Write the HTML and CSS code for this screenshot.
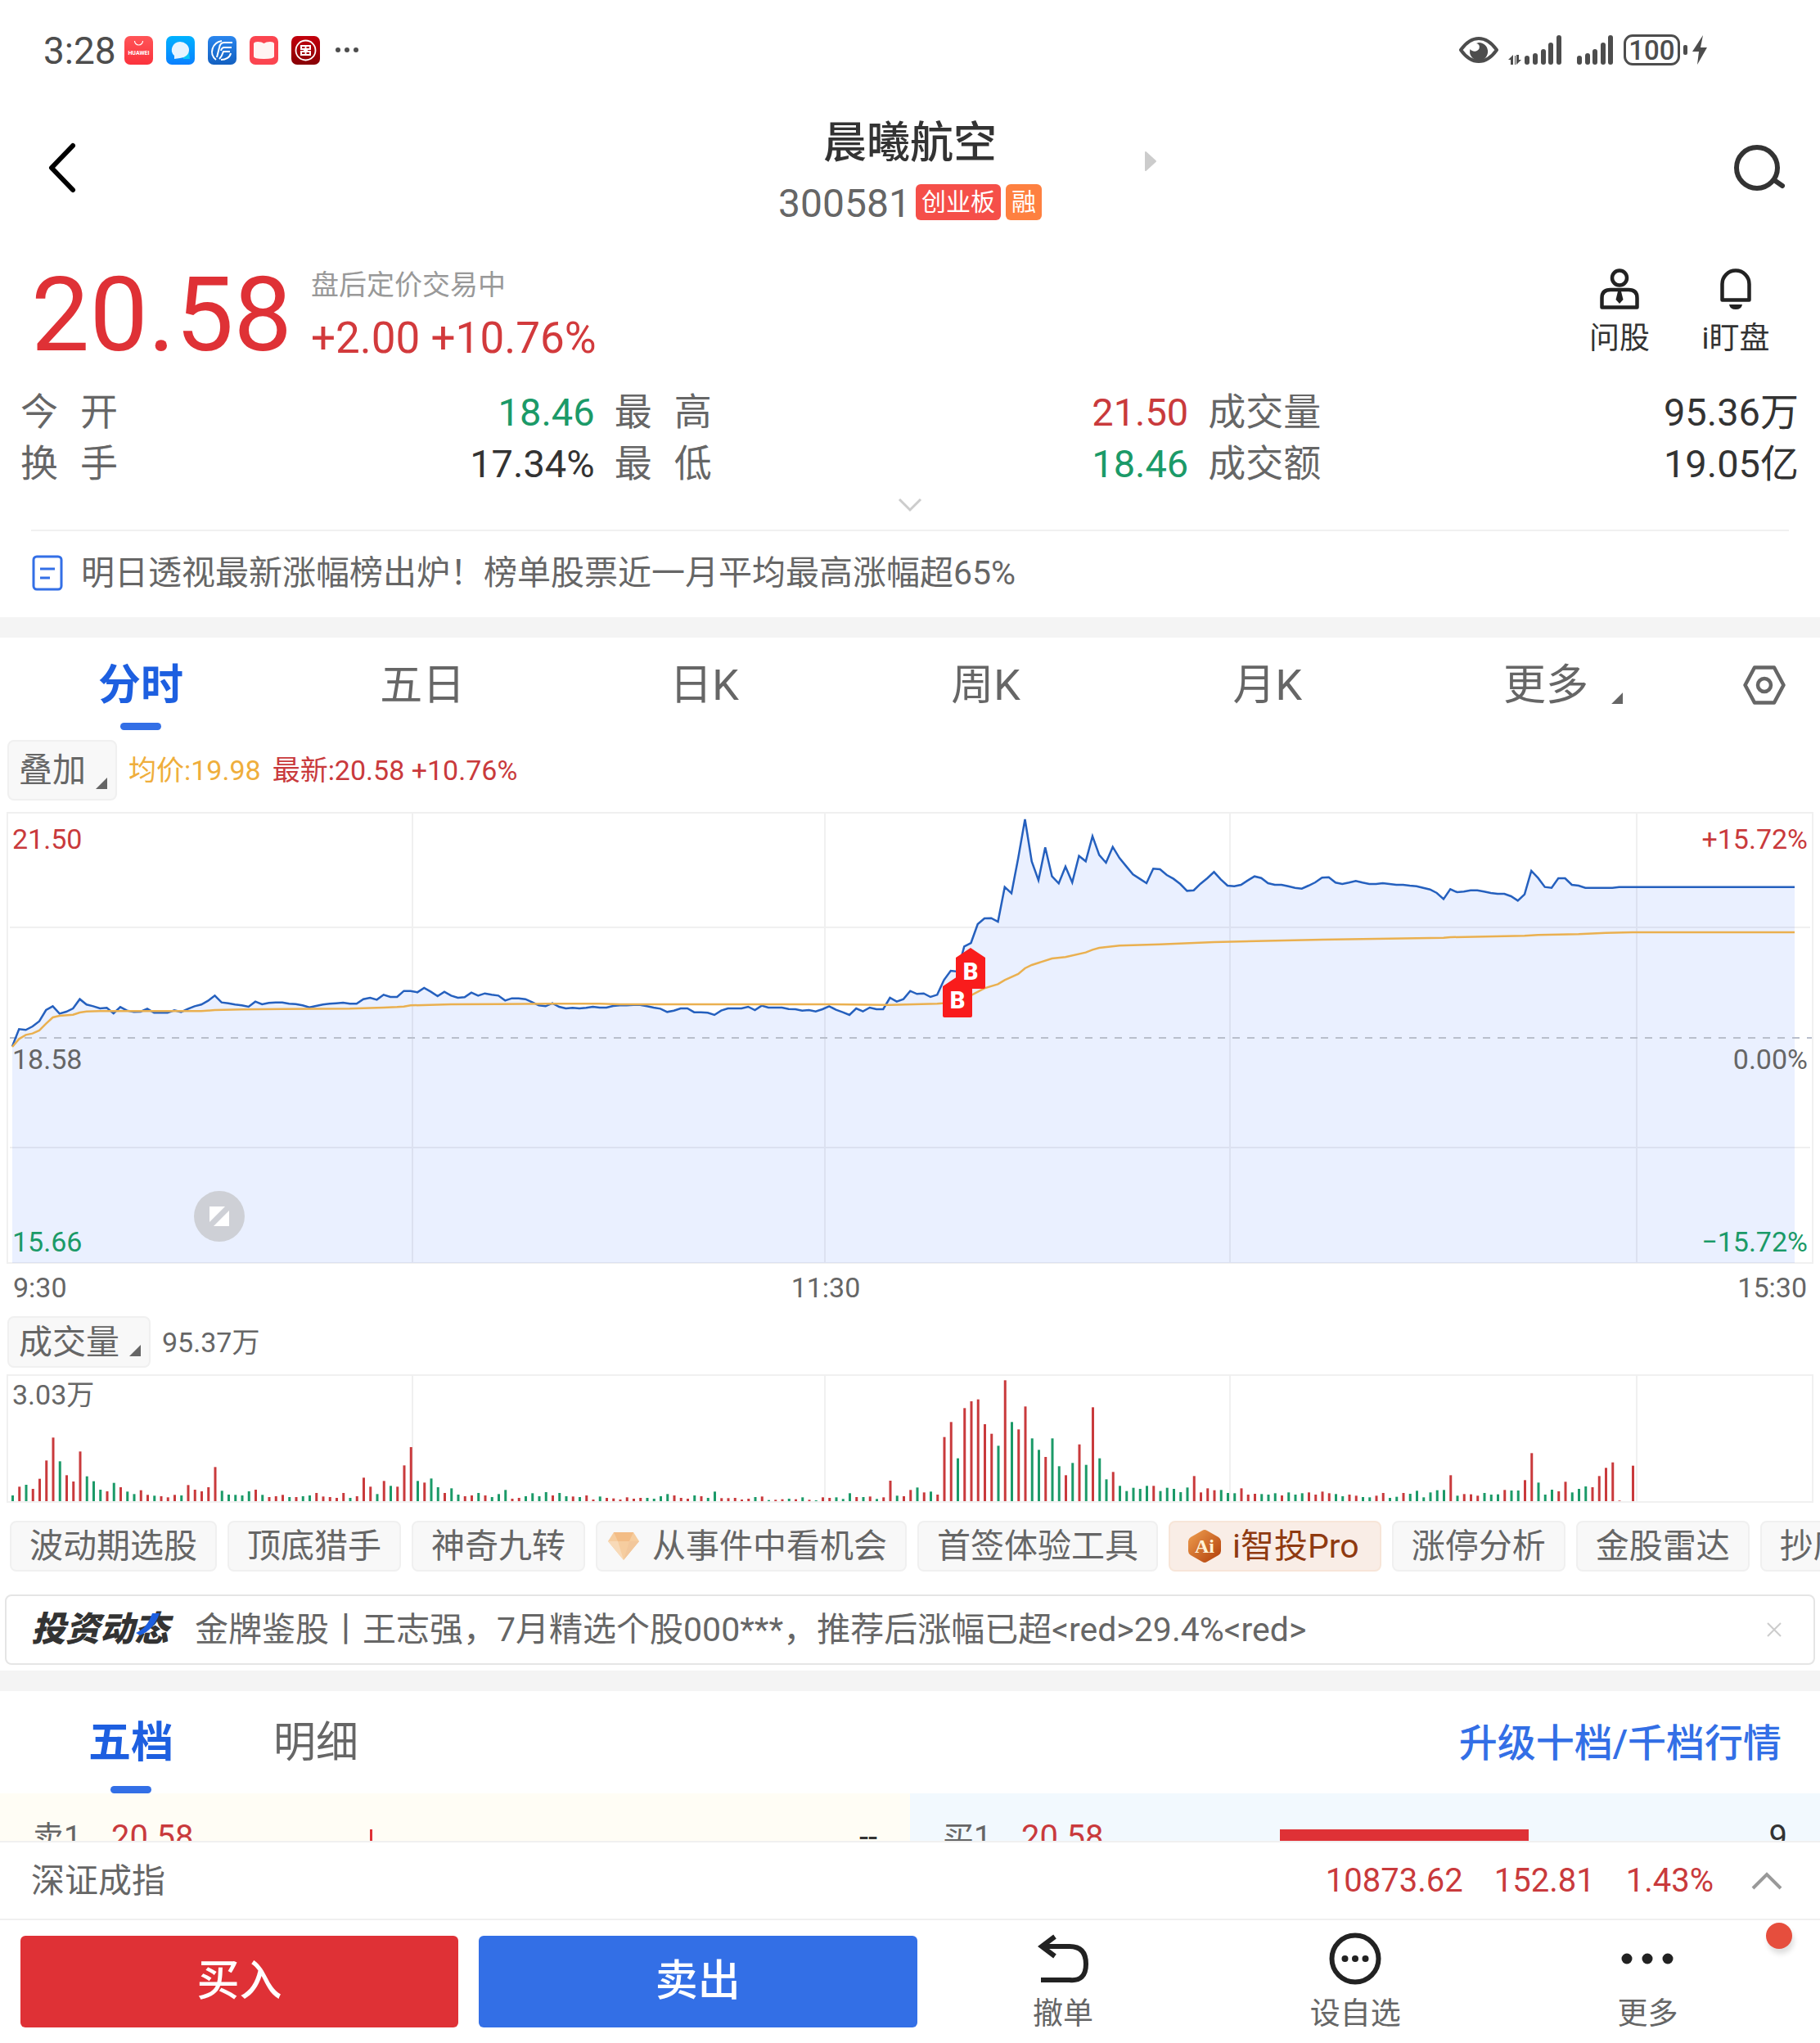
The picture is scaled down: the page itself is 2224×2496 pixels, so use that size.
FILE: index.html
```html
<!DOCTYPE html>
<html lang="zh-CN">
<head>
<meta charset="utf-8">
<meta name="viewport" content="width=device-width, initial-scale=1">
<title>晨曦航空 300581</title>
<link rel="stylesheet" href="styles.css">
</head>
<body>
<div class="app">
  <main class="content">
    <div class="status">
      <span class="status-time">3:28</span>
      <div class="status-apps">
        <svg viewBox="0 0 35 35"><defs><linearGradient id="ga" x2="0" y2="1"><stop stop-color="#ff5558"/><stop offset="1" stop-color="#fb323c"/></linearGradient></defs><rect width="35" height="35" rx="7" fill="url(#ga)"/><path d="M12.500 6a5 5 0 0 0 10 0" fill="none" stroke="#fff" stroke-width="1.200"/><text x="17.500" y="23" class="mini-word">HUAWEI</text></svg>
        <svg viewBox="0 0 35 35"><defs><linearGradient id="gb" x2="0" y2="1"><stop stop-color="#00b2ff"/><stop offset="1" stop-color="#0a80ff"/></linearGradient></defs><rect width="35" height="35" rx="7" fill="url(#gb)"/><path d="M20 20l8 0 1 8-8 0z" fill="#0bc6f5"/><path d="M17 7a11 10 0 0 1 0 20l-7 1v-4A11 10 0 0 1 17 7z" fill="#e6f4ff"/></svg>
        <svg viewBox="0 0 35 35"><defs><linearGradient id="gc" x2="0" y2="1"><stop stop-color="#2a86ee"/><stop offset="1" stop-color="#1360c0"/></linearGradient></defs><rect width="35" height="35" rx="7" fill="url(#gc)"/><path d="M30 8H20q-5 0-6 6l-3 12M29 14h-9q-3 0-4 4M27 19h-8q-2 6-5 9M17 6C5 8 1 22 10 29M28 21c-1 5-6 8-12 8" fill="none" stroke="#fff" stroke-width="2"/></svg>
        <svg viewBox="0 0 35 35"><rect width="35" height="35" rx="7" fill="#fb4550"/><path d="M5 9q1-2 5-2 5 0 7.500 2Q20 7 25 7q4 0 5 2v16q0 3-12.500 3T5 25z" fill="#fff4f3"/></svg>
        <svg viewBox="0 0 35 35"><defs><linearGradient id="gd" x2="0" y2="1"><stop stop-color="#c3000c"/><stop offset="1" stop-color="#870005"/></linearGradient></defs><rect width="35" height="35" rx="7" fill="url(#gd)"/><circle cx="17.500" cy="17.500" r="12" fill="none" stroke="#fff" stroke-width="1.800"/><path d="M11 12h13M11 23h13M12 12v4h4v3h-4v4M23 12v4h-4v3h4v4M17.500 12v11" fill="none" stroke="#fff" stroke-width="2"/></svg>
      </div>
      <svg class="status-more" viewBox="0 0 30 8"><circle cx="4" cy="4" r="3"/><circle cx="15" cy="4" r="3"/><circle cx="26" cy="4" r="3"/></svg>
      <div class="status-right">
        <svg class="eye" viewBox="0 0 48 34"><path d="M2 17Q12 3 24 3t22 14Q36 31 24 31T2 17z" fill="none" stroke="#4d4d4d" stroke-width="4" stroke-linejoin="round"/><path d="M24 8a11 11 0 1 1-10.500 8 6.500 6.500 0 0 0 11-.500Q26 10 21 9z" fill="#4d4d4d"/></svg>
        <svg class="signal-data" viewBox="0 0 66 36"><path d="M0 30l6-6v12H3v-6zM16 30l-6 6V24h3v6zM8 25h1v11H8z"/><rect x="20" y="25" width="6" height="11" rx="3"/><rect x="30" y="22" width="6" height="14" rx="3"/><rect x="40" y="17" width="6" height="19" rx="3"/><rect x="49" y="9" width="6" height="27" rx="3"/><rect x="59" y="0" width="6" height="36" rx="3"/></svg>
        <svg class="signal" viewBox="0 0 45 36"><rect x="0" y="25" width="6" height="11" rx="3"/><rect x="10" y="22" width="6" height="14" rx="3"/><rect x="19" y="17" width="6" height="19" rx="3"/><rect x="29" y="9" width="6" height="27" rx="3"/><rect x="38" y="0" width="6" height="36" rx="3"/></svg>
        <span class="battery">100</span>
        <svg class="bolt" viewBox="0 0 30 36"><rect x="0" y="12" width="5" height="12" rx="2"/><path d="M24 0L11 20h8l-2 16L29 15h-8z"/></svg>
      </div>
    </div>

    <header class="header">
      <button class="icon-button" aria-label="返回"><svg class="back" viewBox="0 0 36 64"><path d="M31 5L5 32l26 27" fill="none" stroke="#000" stroke-width="6" stroke-linecap="round" stroke-linejoin="round"/></svg></button>
      <div class="stock">
        <h1 class="stock-name">晨曦航空</h1>
        <div class="stock-line"><span class="stock-code">300581</span><span class="badge badge-red">创业板</span><span class="badge badge-orange">融</span></div>
        <svg class="next" viewBox="0 0 16 26"><path d="M2 2l12 11L2 24z" fill="#ccc" stroke="#ccc" stroke-width="2" stroke-linejoin="round"/></svg>
      </div>
      <button class="icon-button" aria-label="搜索"><svg class="search" viewBox="0 0 64 58"><circle cx="29" cy="29" r="25" fill="none" stroke="#333" stroke-width="6"/><path d="M50 44l10 7" stroke="#333" stroke-width="6" stroke-linecap="round"/></svg></button>
    </header>

    <section class="quote">
      <span class="price">20.58</span>
      <div class="change">
        <span class="session">盘后定价交易中</span>
        <span class="delta">+2.00 +10.76%</span>
      </div>
      <button class="tool"><svg viewBox="0 0 50 50"><circle cx="25" cy="11.500" r="9" fill="none" stroke="#222" stroke-width="4.500"/><path d="M3.500 47.500V36Q3.500 26 14 26h22q10.500 0 10.500 10v11.500z" fill="none" stroke="#222" stroke-width="4.500" stroke-linejoin="round"/><path d="M23 28h4l2.500 10-4.500 5-4.500-5z" fill="#222"/></svg>问股</button>
      <button class="tool"><svg viewBox="0 0 50 50"><path d="M8.500 38.500V19a16.500 16.500 0 0 1 33 0v19.500z" fill="none" stroke="#222" stroke-width="4.500" stroke-linejoin="round"/><path d="M17 44h16q-1 6-8 6t-8-6z" fill="#222"/></svg>i盯盘</button>
    </section>

    <dl class="stats">
      <div><dt>今<i></i>开</dt><dd class="down">18.46</dd></div>
      <div><dt>最<i></i>高</dt><dd class="up">21.50</dd></div>
      <div><dt>成交量</dt><dd>95.36万</dd></div>
      <div><dt>换<i></i>手</dt><dd>17.34%</dd></div>
      <div><dt>最<i></i>低</dt><dd class="down">18.46</dd></div>
      <div><dt>成交额</dt><dd>19.05亿</dd></div>
    </dl>
    <button class="expand" aria-label="展开"><svg viewBox="0 0 30 18"><path d="M2 2l13 13L28 2" fill="none" stroke="#ccc" stroke-width="3"/></svg></button>

    <a class="notice" href="#">
      <svg viewBox="0 0 38 44"><rect x="2" y="2" width="34" height="40" rx="4" fill="none" stroke="#336fe6" stroke-width="3"/><path d="M10 17h18M10 28h12" stroke="#336fe6" stroke-width="3"/></svg>
      <span>明日透视最新涨幅榜出炉！榜单股票近一月平均最高涨幅超65%</span>
    </a>

    <nav class="periods">
      <button class="tab active">分时</button>
      <button class="tab">五日</button>
      <button class="tab">日K</button>
      <button class="tab">周K</button>
      <button class="tab">月K</button>
      <button class="tab tab-more">更多<i class="corner"></i></button>
      <button class="tab-settings" aria-label="设置"><svg viewBox="0 0 52 48"><path d="M14 2.500h24L49.500 24 38 45.500H14L2.500 24z" fill="none" stroke="#666" stroke-width="4.500" stroke-linejoin="round"/><circle cx="26" cy="24" r="8" fill="none" stroke="#666" stroke-width="4.500"/></svg></button>
    </nav>

    <div class="legend legend-price">
      <button class="pill">叠加<i class="corner"></i></button>
      <span class="average">均价:19.98</span>
      <span class="latest">最新:20.58 +10.76%</span>
    </div>

    <div class="chart price-chart">
      <svg id="price-plot" viewBox="0 0 2208 552" preserveAspectRatio="none"></svg>
      <span class="mark top-left up">21.50</span>
      <span class="mark top-right up">+15.72%</span>
      <span class="mark mid-left">18.58</span>
      <span class="mark mid-right">0.00%</span>
      <span class="mark bottom-left down">15.66</span>
      <span class="mark bottom-right down">−15.72%</span>
      <button class="fullscreen" aria-label="全屏"><svg viewBox="0 0 26 26"><path d="M1 1h19L1 20zM25 25H6L25 6z" fill="#fff"/></svg></button>
    </div>
    <div class="axis"><span>9:30</span><span>11:30</span><span>15:30</span></div>

    <div class="legend legend-volume">
      <button class="pill">成交量<i class="corner"></i></button>
      <span>95.37万</span>
    </div>
    <div class="chart volume-chart">
      <svg id="volume-plot" viewBox="0 0 2208 157" preserveAspectRatio="none"></svg>
      <span class="mark volume-max">3.03万</span>
    </div>

    <nav class="chips">
      <button class="chip">波动期选股</button>
      <button class="chip">顶底猎手</button>
      <button class="chip">神奇九转</button>
      <button class="chip chip-gem"><svg viewBox="0 0 38 34"><path d="M7 0h24l7 11-19 23L0 11z" fill="#f6cd9f"/><path d="M7 0h24l-5 11H12z" fill="#f3bd86"/><path d="M0 11h12l7 23z" fill="#f8dab8"/><path d="M38 11H26l-7 23z" fill="#f2c79b"/></svg>从事件中看机会</button>
      <button class="chip">首签体验工具</button>
      <button class="chip chip-pro"><svg viewBox="0 0 40 42"><defs><linearGradient id="ge" x2="1" y2="1"><stop stop-color="#f0a050"/><stop offset="1" stop-color="#b03c08"/></linearGradient></defs><path d="M17 2q3-2 6 0l14 8q3 2 3 5v12q0 3-3 5l-14 8q-3 2-6 0L3 32q-3-2-3-5V15q0-3 3-5z" fill="url(#ge)"/><text x="20" y="29" class="ai">Ai</text></svg>i智投Pro</button>
      <button class="chip">涨停分析</button>
      <button class="chip">金股雷达</button>
      <button class="chip">抄底选股</button>
    </nav>

    <div class="news">
      <strong class="news-logo">投资动态<svg viewBox="0 0 30 28"><path d="M20 0h9Q22 20 5 27l-5-3Q14 18 20 0z" fill="#1d5fe0"/></svg></strong>
      <a href="#">金牌鉴股丨王志强，7月精选个股000***，推荐后涨幅已超&lt;red&gt;29.4%&lt;red&gt;</a>
      <button class="close" aria-label="关闭"><svg viewBox="0 0 20 20"><path d="M2 2l16 16M18 2L2 18" stroke="#ccc" stroke-width="2"/></svg></button>
    </div>

    <section class="depth">
      <div class="depth-head">
        <button class="tab active">五档</button>
        <button class="tab">明细</button>
        <a class="upgrade" href="#">升级十档/千档行情</a>
      </div>
      <div class="book">
        <table class="side sell"><tr><th scope="row">卖1</th><td class="book-price">20.58</td><td><i class="bar" style="width:3px"></i></td><td class="book-count">--</td></tr></table>
        <table class="side buy"><tr><th scope="row">买1</th><td class="book-price">20.58</td><td><i class="bar" style="width:304px"></i></td><td class="book-count">9</td></tr></table>
      </div>
    </section>
  </main>

  <footer class="footer">
    <div class="index">
      <span class="index-name">深证成指</span>
      <span>10873.62</span><span>152.81</span><span>1.43%</span>
      <svg viewBox="0 0 38 22"><path d="M2 20L19 3l17 17" fill="none" stroke="#999" stroke-width="4"/></svg>
    </div>
    <div class="actions">
      <button class="trade buy-button">买入</button>
      <button class="trade sell-button">卖出</button>
      <button class="action"><svg viewBox="0 0 64 64"><path d="M22 5L6 17l16 12M7 17h33q20 0 20 21.500T40 58H5" fill="none" stroke="#222" stroke-width="6"/></svg>撤单</button>
      <button class="action"><svg viewBox="0 0 64 64"><circle cx="32" cy="32" r="28.500" fill="none" stroke="#222" stroke-width="6"/><g fill="#222"><circle cx="19.500" cy="32" r="4"/><circle cx="32" cy="32" r="4"/><circle cx="44.500" cy="32" r="4"/></g></svg>设自选</button>
      <button class="action"><svg viewBox="0 0 64 64"><g fill="#222"><circle cx="7" cy="32" r="6.500"/><circle cx="32" cy="32" r="6.500"/><circle cx="57" cy="32" r="6.500"/></g></svg>更多</button>
      <i class="dot"></i>
    </div>
  </footer>
</div>
<script src="chart.js"></script>
</body>
</html>
```
FILE: styles.css
```css
* { box-sizing: border-box; }

body {
  margin: 0;
  background: #fff;
  color: #333;
  font-family: Roboto, "Noto Sans CJK SC", sans-serif;
  line-height: 48px;
}

button {
  margin: 0;
  padding: 0;
  border: 0;
  background: none;
  color: inherit;
  font: inherit;
}

a { color: inherit; text-decoration: none; }
svg { display: block; flex: none; }
h1, dl, dd { margin: 0; }

.up { color: #c93a3c; }
.down { color: #1b9a68; }

.app {
  display: flex;
  flex-direction: column;
  height: 100vh;
}

.content {
  flex: 1;
  min-height: 0;
  overflow: hidden;
}

/* Status bar */
.status {
  display: flex;
  align-items: center;
  height: 122px;
  padding: 0 137px 0 53px;
  color: #4d4d4d;
  fill: #4d4d4d;
}
.status-time { width: 99px; padding-top: 2px; font-size: 46px; }
.status-apps { display: flex; gap: 16px; }
.status-apps svg { width: 35px; height: 35px; }
.mini-word { font: 700 7px Roboto, sans-serif; fill: #fff; text-anchor: middle; }
.status-more { width: 30px; height: 8px; margin-left: 18px; }
.status-right { display: flex; align-items: center; margin-left: auto; }
.eye { width: 48px; height: 34px; margin-right: 12px; }
.signal-data { width: 66px; height: 36px; margin-right: 18px; }
.signal { width: 45px; height: 36px; margin-right: 12px; }
.battery {
  width: 69px;
  height: 38px;
  margin-right: 4px;
  border: 3px solid #4d4d4d;
  border-radius: 11px;
  font-size: 33px;
  font-weight: 500;
  line-height: 33px;
  text-align: center;
}
.bolt { width: 30px; height: 36px; }

/* Title bar */
.header {
  display: grid;
  grid-template-columns: 120px 1fr 120px;
  align-items: center;
  height: 166px;
}
.icon-button { display: grid; place-items: center; height: 120px; }
.back { width: 36px; height: 64px; margin-left: 31px; }
.search { width: 64px; height: 58px; margin-right: 28px; }
.stock { position: relative; text-align: center; }
.stock-name { padding-top: 3px; font-size: 53px; font-weight: 500; line-height: 64px; }
.stock-line {
  display: flex;
  justify-content: center;
  gap: 6px;
  margin-top: 18px;
  line-height: 44px;
}
.stock-code { padding-top: 2px; color: #666; font-size: 48px; }
.badge { padding: 0 7px; border-radius: 6px; color: #fff; font-size: 30px; }
.badge-red { background: #f54f49; }
.badge-orange { background: #fe8040; }
.next { position: absolute; top: 44px; left: calc(50% + 286px); width: 16px; height: 26px; }
.stock-line .badge { height: 44px; }

/* Last price */
.quote {
  display: flex;
  align-items: flex-start;
  height: 160px;
  padding: 33px 32px 0 38px;
}
.price { width: 342px; color: #df3136; font-size: 127px; line-height: 128px; }
.change { display: flex; flex-direction: column; flex: 1; padding-top: 6px; }
.session { color: #999; font-size: 34px; line-height: 42px; }
.delta { margin-top: 12px; color: #d23a3c; font-size: 53px; line-height: 64px; }
.tool {
  display: flex;
  flex-direction: column;
  align-items: center;
  gap: 12px;
  width: 142px;
  padding-top: 7px;
  font-size: 37px;
}
.tool svg { width: 50px; height: 50px; }

.stats {
  display: grid;
  grid-template-columns: 35fr 35fr 36fr;
  column-gap: 24px;
  padding: 24px 26px 0 25px;
  font-size: 47px;
  line-height: 63px;
}
.stats div { display: flex; justify-content: space-between; }
.stats dt { display: flex; color: #666; font-size: 46px; }
.stats dt i { width: 27px; }

.expand { display: flex; justify-content: center; width: 100%; height: 49px; padding-top: 10px; }
.expand svg { width: 30px; height: 18px; }

.notice {
  display: flex;
  align-items: center;
  gap: 22px;
  height: 107px;
  margin: 0 38px;
  padding: 0 0 3px 1px;
  border-top: 2px solid #f0f0f0;
  color: #666;
  font-size: 41px;
}
.notice svg { width: 38px; height: 44px; }

/* Period tabs */
.periods {
  display: grid;
  grid-template-columns: repeat(6, 13fr) 6fr;
  height: 141px;
  border-top: 25px solid #f4f4f4;
}
.tab {
  position: relative;
  padding-top: 2px;
  color: #666;
  font-size: 52px;
  line-height: 64px;
}
.active { color: #1d5fe0; font-weight: 700; }
.active::after {
  position: absolute;
  bottom: 3px;
  left: calc(50% - 25px);
  width: 50px;
  height: 9px;
  border-radius: 5px;
  background: #336fe6;
  content: "";
}
.corner {
  width: 14px;
  height: 14px;
  background: #666;
  clip-path: polygon(100% 0, 100% 100%, 0 100%);
}
.tab-more { display: flex; align-items: center; justify-content: center; padding-right: 8px; }
.tab-more .corner { position: absolute; right: 82px; bottom: 35px; }
.tab-settings { display: grid; align-items: center; padding-left: 65px; }
.tab-settings svg { width: 52px; height: 48px; }

/* Legends above the plots */
.legend { display: flex; align-items: center; margin: 0 9px; color: #666; font-size: 34px; }
.legend-price { height: 74px; margin-top: 9px; }
.legend-volume { height: 63px; margin-top: 6px; }
.pill {
  display: flex;
  align-items: center;
  gap: 12px;
  height: 100%;
  margin-right: 14px;
  padding: 0 10px 0 12px;
  border: 2px solid #f0f0f0;
  border-radius: 8px;
  background: #f8f8f8;
  font-size: 41px;
}
.pill .corner { align-self: flex-end; margin-bottom: 12px; }
.average { margin-right: 14px; color: #efae3c; }
.latest { color: #c93a3c; }

/* Plots */
.chart { position: relative; margin: 0 8px; }
.chart > svg { width: 100%; height: 100%; }
.price-chart { height: 552px; margin-top: 14px; }
.volume-chart { height: 157px; margin-top: 8px; }
.mark { position: absolute; color: #666; font-size: 34px; line-height: 40px; }
.mark.up { color: #c93a3c; }
.mark.down { color: #1b9a68; }
.top-left { top: 13px; left: 7px; }
.top-right { top: 13px; right: 7px; }
.mid-left { top: 282px; left: 7px; }
.mid-right { top: 282px; right: 7px; }
.bottom-left { bottom: 7px; left: 7px; }
.bottom-right { bottom: 7px; right: 7px; }
.volume-max { top: 5px; left: 7px; }
.grid { fill: none; stroke: #000; stroke-opacity: .06; stroke-width: 2; }
.zero { stroke: #b9bfcc; stroke-width: 2; stroke-dasharray: 9 9; }
.area { fill: #eaf0ff; }
.line { fill: none; stroke: #2560be; stroke-width: 2.500; }
.mean { fill: none; stroke: #eab050; stroke-width: 2.500; }
.flag { fill: #f91c1c; }
.flag-text { fill: #fff; font-size: 29px; font-weight: 900; text-anchor: middle; }
.rise { fill: #c93a3c; }
.fall { fill: #1b9a68; }
.fullscreen {
  position: absolute;
  bottom: 27px;
  left: 229px;
  display: grid;
  place-items: center;
  width: 62px;
  height: 62px;
  border-radius: 50%;
  background: #ced0d6;
}
.fullscreen svg { width: 26px; height: 26px; }

.axis {
  display: grid;
  grid-template-columns: 1fr auto 1fr;
  margin: 0 16px;
  color: #666;
  font-size: 34px;
  line-height: 58px;
}
.axis span:nth-child(2) { margin-right: 206px; }
.axis span:last-child { text-align: right; }

/* Tool chips */
.chips { display: flex; gap: 13px; margin-top: 22px; padding-left: 12px; overflow: hidden; }
.chip {
  display: flex;
  flex: none;
  align-items: center;
  height: 62px;
  padding: 0 22px;
  border: 2px solid #f0f0f0;
  border-radius: 8px;
  background: #f8f8f8;
  color: #666;
  font-size: 41px;
}
.chip-gem { gap: 16px; padding-left: 13px; }
.chip-gem svg { width: 38px; height: 34px; }
.chip-pro { gap: 14px; padding-right: 25px; border-color: #f7e5d8; background: #f9ede6; color: #8f3a10; }
.chip-pro svg { width: 40px; height: 42px; }
.ai { fill: #fff4d8; font: 700 24px "Liberation Serif", serif; text-anchor: middle; }

.news {
  display: flex;
  align-items: center;
  height: 86px;
  margin: 28px 6px 7px;
  padding: 0 38px 0 30px;
  border: 2px solid #e5e5e5;
  border-radius: 8px;
  color: #666;
  font-size: 41px;
}
.news-logo {
  position: relative;
  width: 200px;
  color: #333;
  font-size: 42px;
  font-style: italic;
  font-weight: 900;
}
.news-logo svg { position: absolute; top: 4px; left: 128px; width: 30px; height: 28px; }
.close { margin-left: auto; }
.close svg { width: 20px; height: 20px; }

/* Order book */
.depth { border-top: 25px solid #f4f4f4; }
.depth-head { display: flex; align-items: stretch; height: 125px; padding: 0 47px 0 108px; }
.depth-head .tab { margin-right: 122px; }
.depth-head .active::after { bottom: 0; }
.upgrade { margin-left: auto; padding-top: 1px; color: #336fe6; font-size: 47px; font-weight: 500; line-height: 125px; }
.book { display: grid; grid-template-columns: 1fr 1fr; }
.side {
  width: 100%;
  padding: 30px 40px;
  border-spacing: 0;
  table-layout: fixed;
  font-size: 40px;
}
.side th { width: 96px; padding: 0; color: #666; font-size: 38px; font-weight: 400; text-align: left; }
.side td { padding: 0; }
.side .book-price { width: 316px; color: #c93a3c; }
.side .book-count { width: 100px; text-align: right; }
.sell { background: #fffdf5; }
.buy { background: #f2f9fe; }
.bar { display: block; height: 20px; background: #df3136; }

/* Bottom bar */
.footer { flex: none; background: #fff; }
.index {
  display: flex;
  align-items: center;
  gap: 38px;
  height: 97px;
  padding: 0 46px 0 38px;
  border-top: 2px solid #f0f0f0;
  border-bottom: 2px solid #f0f0f0;
  color: #c93a3c;
  font-size: 40px;
}
.index-name { margin-right: auto; color: #666; font-size: 41px; }
.index svg { width: 38px; height: 22px; margin-left: 8px; }
.actions {
  position: relative;
  display: grid;
  grid-template-columns: 560fr 560fr 357fr 357fr 357fr;
  height: 150px;
  padding-right: 32px;
}
.trade {
  height: 112px;
  margin: 19px 0 0 25px;
  border-radius: 6px;
  color: #fff;
  font-size: 52px;
  font-weight: 500;
}
.buy-button { background: #df3136; }
.sell-button { background: #336fe6; }
.action {
  display: flex;
  flex-direction: column;
  align-items: center;
  gap: 12px;
  padding-top: 15px;
  color: #666;
  font-size: 37px;
}
.action svg { width: 64px; height: 64px; }
.dot {
  position: absolute;
  top: 3px;
  right: 34px;
  width: 32px;
  height: 32px;
  border-radius: 50%;
  background: #e64e3d;
  box-shadow: 2px 6px 6px #0002;
}
```
FILE: chart.js
```js
// One sample per minute; every plot shares the same horizontal step.
const START = 7;
const STEP = 8.25;
const x = i => START + i * STEP;

// Minute prices, as levels measured down from the top (three levels per pixel).
const price = [
  895,832,835,822,803,762,748,775,768,756,722,742,748,756,754,774,751,764,769,768,
  757,772,772,772,763,769,758,748,742,728,709,734,737,742,745,750,731,741,736,734,
  734,739,740,745,752,747,742,739,737,735,739,739,722,717,724,706,714,714,692,692,
  697,681,695,711,695,709,717,715,698,709,701,706,709,727,719,719,722,733,745,748,
  737,750,756,754,756,754,750,753,753,747,745,745,743,743,748,753,757,769,764,756,
  756,770,770,772,780,764,756,756,756,750,762,746,753,753,753,758,759,764,762,767,
  759,748,761,770,780,756,767,753,759,759,717,731,722,692,703,701,714,706,652,618,
  621,529,516,447,426,425,438,311,334,205,63,217,286,166,272,298,236,294,197,217,
  125,194,222,164,205,235,265,281,297,244,246,267,281,300,325,323,299,279,256,283,
  306,308,303,287,272,278,297,303,303,308,314,317,306,294,277,275,295,300,295,289,
  295,300,300,297,300,303,303,306,308,314,320,333,355,319,330,328,323,323,328,333,
  336,336,345,361,338,252,278,311,314,279,279,303,306,314,314,314,314,314,311
];

// Running average, as [minute, level] knots.
const mean = [
  [0,897],[1,868],[2,853],[3,848],[4,837],[5,812],[6,789],[7,783],[9,779],[10,771],
  [11,767],[13,766],[28,766],[30,762],[34,760],[40,758],[50,757],[55,753],[57,751],
  [58,749],[59,745],[65,741],[72,740],[80,739],[87,739],[90,741],[120,741],[130,743],
  [137,739],[139,735],[142,708],[144,682],[146,667],[147,652],[149,630],[150,609],
  [151,597],[154,573],[156,568],[159,551],[160,541],[161,534],[164,526],[170,521],
  [178,513],[194,504],[212,497],[213,495],[224,490],[226,487],[232,484],[236,479],
  [240,477],[264,477]
];

// Minute volume: r for a rise, g for a fall, then the level of the bar's top.
const VOLUME_BASE = 762;
const volume = `g741 r709 g702 r717 r680 r613 r529 g616 r667 r690 r580 g671 g689 g720 r726
g695 r711 g727 g736 r722 r739 g742 r744 r748 r739 g741 r703 r720 r726 r711 r637 g724 g738
g739 g741 g726 r720 g739 r747 r744 r739 g747 r747 g744 g741 r732 r745 r747 r750 r732 g750
r744 r676 r709 g736 r688 g706 r709 r631 r564 g688 r694 g679 g711 r732 g715 g738 r744 r741
g732 r741 g747 g736 g721 r753 r750 g744 g733 g744 g729 r741 g732 g744 r745 g747 r741 r756
g745 r750 r752 r756 r748 r753 r750 g750 g753 g744 g736 r741 r750 r753 g741 r744 g750 g727
r751 r751 r750 r756 r753 g747 r745 g758 r757 r755 g753 r755 g748 r757 g759 r748 r750 g748
g754 g733 r747 g747 r745 g754 r748 r687 g742 r744 r721 g712 r730 g727 r738 r527 r472 g605
r421 r396 r389 r480 r515 g559 r319 g472 r499 r415 g532 g574 r600 g532 g634 r667 g622 r554
g629 r418 g605 g682 r655 g706 g725 g713 g717 g706 r706 g725 g713 g717 g729 g712 r670 r730
r715 r722 g721 g732 g733 r715 r738 r735 g736 g738 g733 r741 g730 g738 g733 r730 r738 r727
r733 g736 g744 r738 r742 g747 g748 r742 r732 g750 g746 r732 g735 g724 g748 g730 g722 g721
r667 g742 r736 r737 r742 g732 g738 g737 r721 g723 g723 r685 r586 g694 g738 g720 r726 r691
g730 g717 g708 r711 r670 r640 r620 r760 r762 r632`.split(/\s+/);

const y = level => (level - 36) / 3;
const series = price.map((level, i) => `${x(i)},${y(level)}`);
series.push(`${x(264)},${y(311)}`);
const average = mean.map(([i, level]) => `${x(i)},${y(level)}`);
const columns = height => [496, 1000, 1495, 1992].map(c => `M${c} 1V${height - 1}`).join('');
const flag = (left, top) =>
  `<path class="flag" d="M${left} ${top + 12}L${left + 18} ${top}L${left + 36} ${top + 12}V${top + 48}q0 2-2 2H${left + 2}q-2 0-2-2z"/>
   <text class="flag-text" x="${left + 18}" y="${top + 39}">B</text>`;

document.getElementById('price-plot').innerHTML = `
  <polygon class="area" points="${x(0)},551 ${series.join(' ')} ${x(264)},551"/>
  <path class="grid" d="M1 1H2207V551H1z${columns(552)}M4 141H2204M4 410H2204"/>
  <path class="zero" d="M4 276H2206"/>
  <polyline class="line" points="${series.join(' ')}"/>
  <polyline class="mean" points="${average.join(' ')}"/>
  ${flag(1144, 201)}${flag(1160, 166)}`;

document.getElementById('volume-plot').innerHTML = `
  <path class="grid" d="M1 1H2207V156H1z${columns(157)}"/>
  ${volume.map((bar, i) => {
    const height = (VOLUME_BASE - bar.slice(1)) / 3;
    return `<rect class="${bar[0] === 'r' ? 'rise' : 'fall'}" x="${x(i) - 1}" y="${155 - height}" width="3" height="${height}"/>`;
  }).join('')}`;
```
